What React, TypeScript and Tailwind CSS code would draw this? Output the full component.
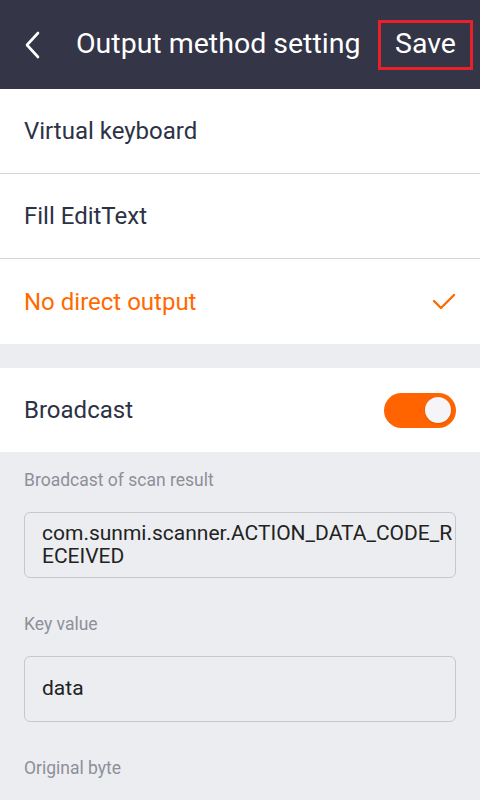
import React, { useState } from "react";

const options = ["Virtual keyboard", "Fill EditText", "No direct output"];

export default function App() {
  const [selected, setSelected] = useState(2);
  const [broadcast, setBroadcast] = useState(true);

  return (
    <div className="w-[480px] h-[800px] overflow-hidden bg-[#ecedf0] font-['Roboto',sans-serif]">
      {/* Header */}
      <div className="h-[89px] bg-[#343547] flex items-center text-white">
        <button className="w-[76px] h-full flex items-center pl-[22px]">
          <svg width="20" height="30" viewBox="0 0 20 30" fill="none">
            <path d="M16 3 L5 15 L16 27" stroke="#ffffff" strokeWidth="2.6" strokeLinecap="round" strokeLinejoin="round" />
          </svg>
        </button>
        <div className="flex-1 text-[28.5px] leading-none">Output method setting</div>
        <button className="mr-[7px] w-[95px] h-[50px] border-[3px] border-[#e8202a] text-[28.5px] leading-none flex items-center justify-center">
          Save
        </button>
      </div>

      {/* Options */}
      <div className="bg-white">
        {options.map((opt, i) => (
          <div
            key={opt}
            onClick={() => setSelected(i)}
            className={`h-[85px] flex items-center justify-between px-6 ${i < options.length - 1 ? "border-b border-[#d6d6d9]" : ""}`}
          >
            <span className={`text-[24px] leading-none ${selected === i ? "text-[#ff6a00]" : "text-[#2c3245]"}`}>{opt}</span>
            {selected === i && (
              <svg width="24" height="18" viewBox="0 0 24 18" fill="none">
                <path d="M2 8 L9 15 L22 2" stroke="#ff6a00" strokeWidth="2.4" strokeLinecap="round" strokeLinejoin="round" />
              </svg>
            )}
          </div>
        ))}
      </div>

      {/* Broadcast */}
      <div className="mt-6 h-[84px] bg-white flex items-center justify-between px-6">
        <span className="text-[24px] leading-none text-[#2c3245]">Broadcast</span>
        <button
          onClick={() => setBroadcast(!broadcast)}
          className={`w-[72px] h-[35px] rounded-full flex items-center px-[5px] ${broadcast ? "bg-[#ff6400] justify-end" : "bg-[#c8c8cc] justify-start"}`}
        >
          <span className="w-[26px] h-[26px] rounded-full bg-[#f5f5f7] shadow-sm" />
        </button>
      </div>

      {/* Fields */}
      <div className="px-6">
        <div className="pt-4 text-[17.5px] leading-[24px] text-[#8e8f99]">Broadcast of scan result</div>
        <div className="mt-5 h-[66px] border border-[#c8c8cc] rounded-[6px] pl-[17px] pr-[2px] flex items-center text-[21px] leading-[23px] text-[#222] break-all">
          com.sunmi.scanner.ACTION_DATA_CODE_RECEIVED
        </div>
        <div className="pt-[34px] text-[17.5px] leading-[24px] text-[#8e8f99]">Key value</div>
        <div className="mt-5 h-[66px] border border-[#c8c8cc] rounded-[6px] pl-[17px] flex items-center text-[21px] text-[#222]">
          data
        </div>
        <div className="pt-[34px] text-[17.5px] leading-[24px] text-[#8e8f99]">Original byte</div>
      </div>
    </div>
  );
}
